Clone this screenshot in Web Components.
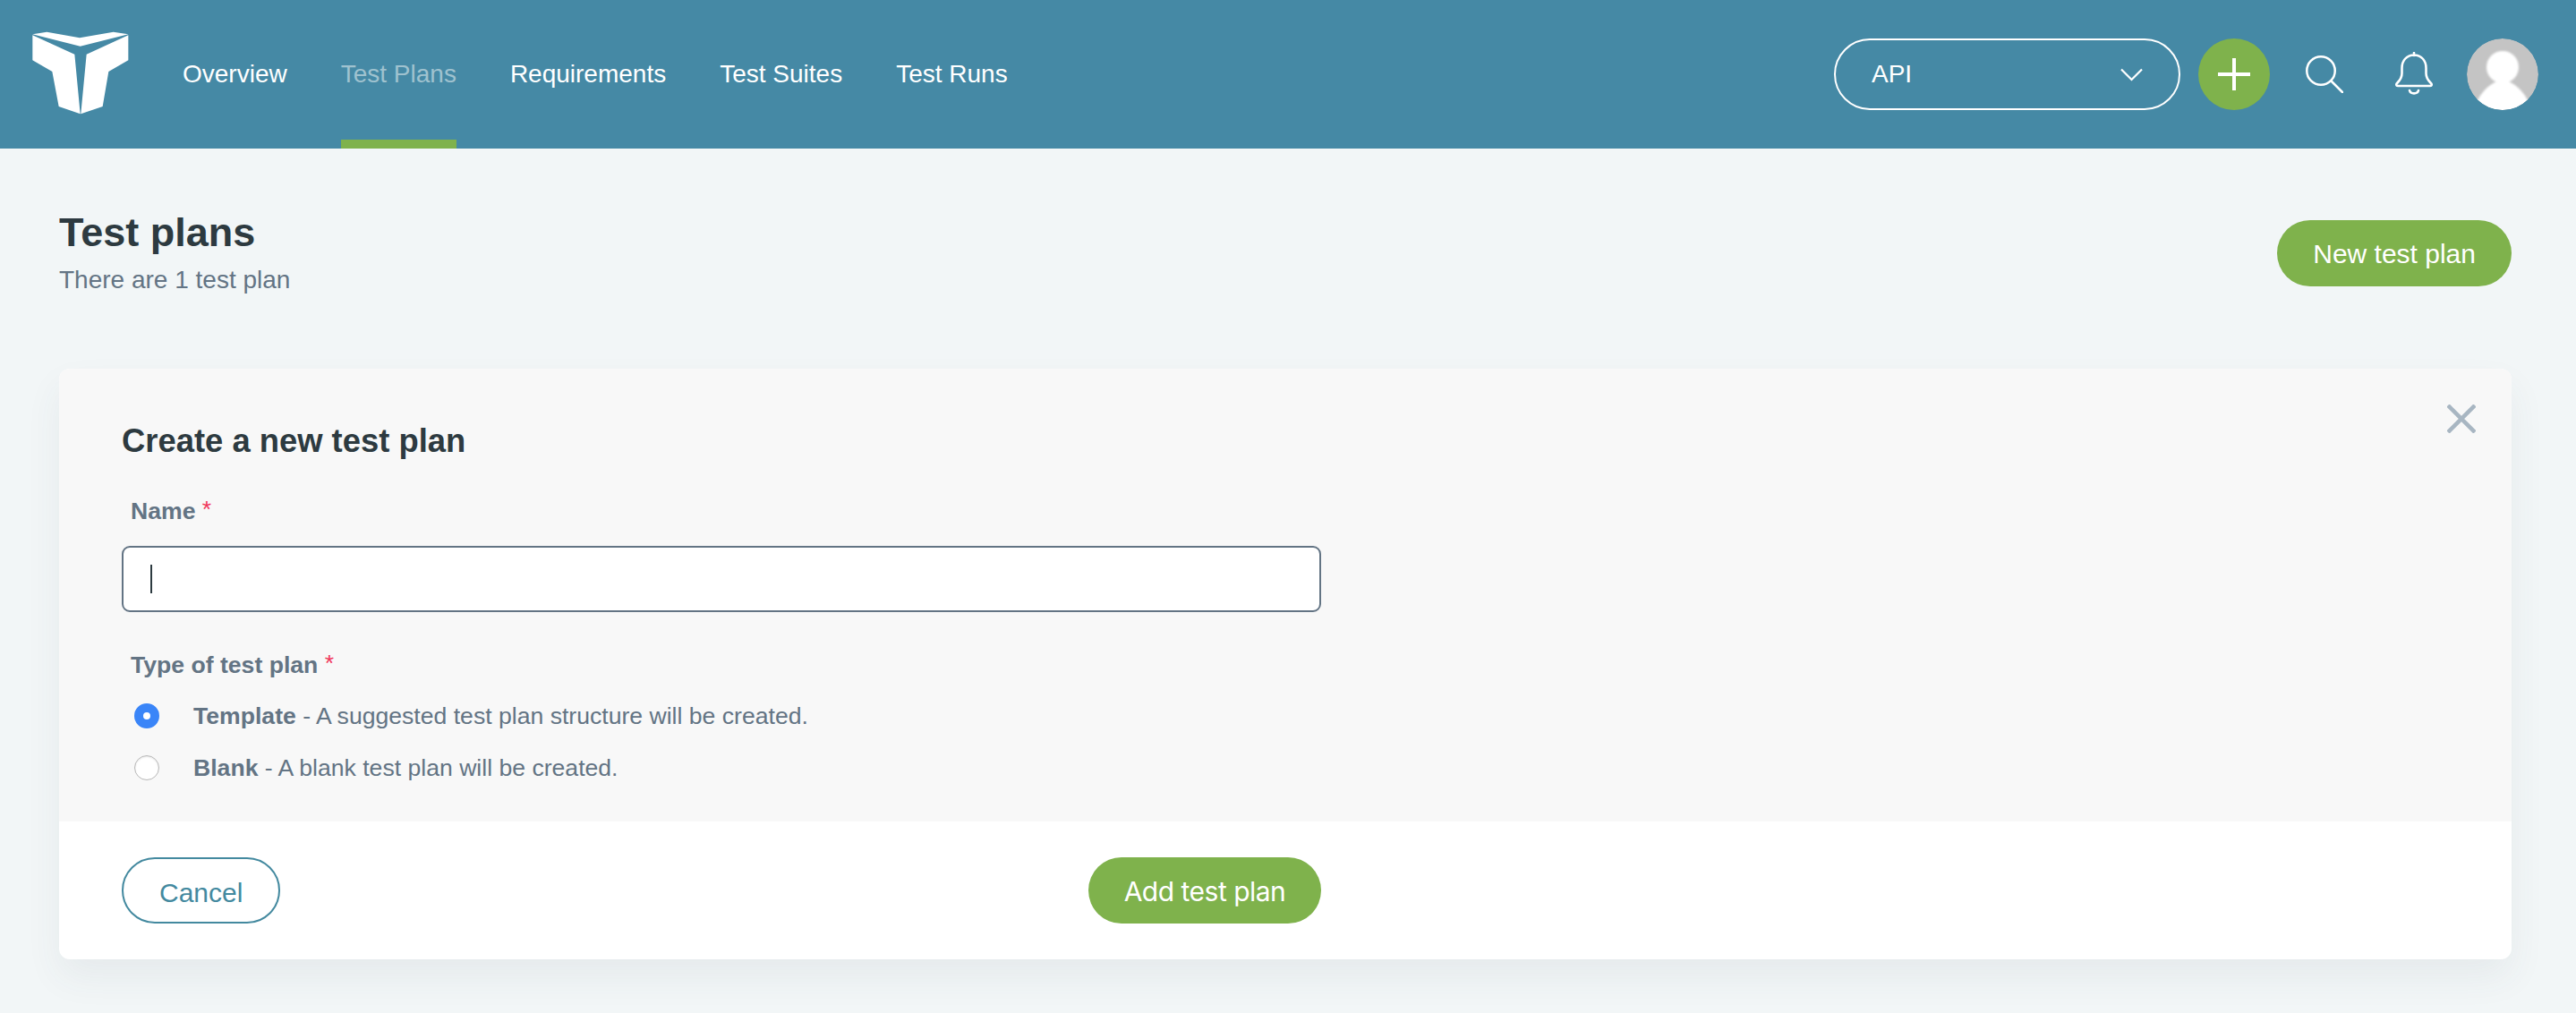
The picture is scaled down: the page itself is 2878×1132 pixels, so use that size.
<!DOCTYPE html>
<html lang="en">
<head>
<meta charset="utf-8">
<title>Test plans</title>
<style>
  html, body { margin: 0; height: 100%; }
  body { background: #f2f6f7; font-family: "Liberation Sans", Arial, sans-serif; overflow: hidden; }
</style>
</head>
<body>
<app-header></app-header>
<plans-page>
  <plan-form></plan-form>
</plans-page>

<script>
class PillButton extends HTMLElement {
  constructor() {
    super();
    this.attachShadow({ mode: "open" });
    this.shadowRoot.innerHTML = `
      <style>
        :host { display: inline-flex; }
        button {
          height: 74px;
          padding: 0 40px;
          border: none;
          border-radius: 37px;
          background: #7fb24c;
          color: #fff;
          font: 30px/76px "Liberation Sans", Arial, sans-serif;
          white-space: nowrap;
        }
        :host([outline]) button {
          background: #fff;
          color: #43899f;
          border: 2px solid #43899f;
        }
        :host([system]) button {
          width: 260px;
          padding: 0;
          font-family: Inter, sans-serif;
          letter-spacing: -.5px;
        }
      </style>
      <button><slot></slot></button>`;
  }
}

class AppHeader extends HTMLElement {
  constructor() {
    super();
    this.attachShadow({ mode: "open" });
    this.shadowRoot.innerHTML = `
      <style>
        :host {
          display: flex;
          align-items: center;
          height: 166px;
          background: #4589a5;
          padding: 0 42px 0 36px;
          color: #fff;
          font: 28px "Liberation Sans", Arial, sans-serif;
        }
        .logo { width: 108px; height: 93px; margin: 0 60px 4px 0; flex: none; }
        nav { display: flex; gap: 60px; height: 100%; }
        nav a { display: flex; align-items: center; box-sizing: border-box; height: 100%; }
        nav a.active { color: #9fc2cf; border-bottom: 10px solid #7fb24c; padding-top: 10px; }
        .right { margin-left: auto; display: flex; align-items: center; }
        .select {
          box-sizing: border-box;
          width: 387px;
          height: 80px;
          border: 2px solid #fff;
          border-radius: 40px;
          display: flex;
          align-items: center;
          justify-content: space-between;
          padding: 0 40px;
        }
        .plus {
          width: 80px;
          height: 80px;
          border-radius: 50%;
          background: #7fb24c;
          margin-left: 20px;
          display: flex;
          align-items: center;
          justify-content: center;
        }
        .search { width: 42px; height: 42px; margin: 0 0 0 40px; }
        .bell { width: 42px; height: 48px; margin: -2px 0 0 58px; }
        .avatar { width: 80px; height: 80px; border-radius: 50%; margin-left: 38px; display: block; }
      </style>
      <svg class="logo" viewBox="36 33 324 279">
        <path fill="#fff" d="M37 43 85 35 195 55 308 35 358 43 197 83Z M37 46 178 110 197 310 125 285 103 168 37 130Z M358 46 218 110 199 310 272 285 292 168 358 130Z"/>
      </svg>
      <nav>
        <a>Overview</a>
        <a class="active">Test Plans</a>
        <a>Requirements</a>
        <a>Test Suites</a>
        <a>Test Runs</a>
      </nav>
      <div class="right">
        <div class="select">
          <span>API</span>
          <svg width="25" height="15" viewBox="0 0 25 15" fill="none" stroke="#fff" stroke-width="2.2"><path d="M1 1.5 12.5 13 24 1.5"/></svg>
        </div>
        <div class="plus">
          <svg width="36" height="36" viewBox="0 0 36 36" fill="none" stroke="#fff" stroke-width="4"><path d="M18 0V36M0 18H36"/></svg>
        </div>
        <svg class="search" viewBox="0 0 42 42" fill="none" stroke="#fff" stroke-width="2.5" stroke-linecap="round">
          <circle cx="17" cy="17" r="15.75"/><path d="M29 29 41 41"/>
        </svg>
        <svg class="bell" viewBox="0 0 42 48" fill="none" stroke="#fff" stroke-width="2.6" stroke-linecap="round" stroke-linejoin="round">
          <path d="M21 1V4M21 3.5C12.5 3.5 7.5 10 7.5 18V24C7.5 29 5 32 2.5 34.5 .5 36.5 1 38 3 38H39C41 38 41.5 36.5 39.5 34.5 37 32 34.5 29 34.5 24V18C34.5 10 29.5 3.5 21 3.5Z"/>
          <path d="M16 43C17 47.5 25 47.5 26 43"/>
        </svg>
        <svg class="avatar" viewBox="0 0 80 80">
          <defs>
            <filter id="soft"><feGaussianBlur stdDeviation="1"/></filter>
            <clipPath id="round"><circle cx="40" cy="40" r="40"/></clipPath>
          </defs>
          <circle cx="40" cy="40" r="40" fill="#c4c4c4"/>
          <g clip-path="url(#round)">
            <g fill="#fff" filter="url(#soft)">
              <ellipse cx="40" cy="32" rx="18" ry="18"/>
              <path d="M10 74C15 60 25 52 33 48H47C55 52 65 60 70 74V90H10Z"/>
            </g>
          </g>
        </svg>
      </div>`;
  }
}

class PlansPage extends HTMLElement {
  constructor() {
    super();
    this.attachShadow({ mode: "open" });
    this.shadowRoot.innerHTML = `
      <style>
        :host { display: block; padding: 66px 72px 0 66px; }
        .top { display: flex; justify-content: space-between; align-items: flex-start; height: 180px; }
        h1 { margin: 0; font: bold 45px/56px "Liberation Sans", Arial, sans-serif; color: #2d3a40; }
        p { margin: 8px 0 0; font: 28px/34px "Liberation Sans", Arial, sans-serif; color: #637484; }
        pill-button { margin-top: 14px; }
      </style>
      <div class="top">
        <div>
          <h1>Test plans</h1>
          <p>There are 1 test plan</p>
        </div>
        <pill-button>New test plan</pill-button>
      </div>
      <slot></slot>`;
  }
}

class RadioOption extends HTMLElement {
  constructor() {
    super();
    this.attachShadow({ mode: "open" });
    this.shadowRoot.innerHTML = `
      <style>
        :host { display: flex; align-items: center; height: 28px; padding-left: 14px; font-size: 26.6px; color: #637484; }
        i { box-sizing: border-box; flex: none; width: 28px; height: 28px; border-radius: 50%; margin-right: 38px;
            background: #fff; border: 1.5px solid #b8b8b8; box-shadow: inset 0 1px 2px rgba(0,0,0,.1); }
        :host([checked]) i { border: 10px solid #3a85f8; box-shadow: none; }
        ::slotted(b) { font-weight: bold; }
      </style>
      <i></i><span><slot></slot></span>`;
  }
}

class PlanForm extends HTMLElement {
  constructor() {
    super();
    this.attachShadow({ mode: "open" });
    this.shadowRoot.innerHTML = `
      <style>
        :host {
          display: block;
          position: relative;
          border-radius: 12px;
          background: #fff;
          box-shadow: 0 20px 40px rgba(60, 80, 90, .065);
          font-family: "Liberation Sans", Arial, sans-serif;
        }
        .body { background: #f8f8f8; height: 506px; box-sizing: border-box; padding: 59px 0 0 70px; border-radius: 12px 12px 0 0; }
        h2 { margin: 0 0 39px; font: bold 36.4px/44px "Liberation Sans", Arial, sans-serif; color: #2d3a40; }
        label { display: block; margin-left: 10px; font: bold 26.6px/30px "Liberation Sans", Arial, sans-serif; color: #637484; }
        label span { color: #f0375a; vertical-align: 2px; font-weight: normal; }
        .input {
          box-sizing: border-box;
          width: 1340px;
          height: 74px;
          margin: 24px 0 42px;
          background: #fff;
          border: 2px solid #637484;
          border-radius: 9px;
          display: flex;
          align-items: center;
          padding-left: 30px;
        }
        .input i { width: 2px; height: 32px; background: #2d3a40; }
        .options { display: flex; flex-direction: column; gap: 30px; margin-top: 28px; }
        .close { position: absolute; top: 40px; right: 40px; width: 32px; height: 32px; }
        .foot { height: 154px; box-sizing: border-box; width: 1410px; padding: 40px 0 0 70px; display: flex; justify-content: space-between; }
      </style>
      <svg class="close" viewBox="0 0 32 32" stroke="#a8b6c2" stroke-width="4.5"><path d="M1 1 31 31M31 1 1 31"/></svg>
      <div class="body">
        <h2>Create a new test plan</h2>
        <label>Name <span>*</span></label>
        <div class="input"><i></i></div>
        <label>Type of test plan <span>*</span></label>
        <div class="options">
          <radio-option checked><b>Template</b> - A suggested test plan structure will be created.</radio-option>
          <radio-option><b>Blank</b> - A blank test plan will be created.</radio-option>
        </div>
      </div>
      <div class="foot">
        <pill-button outline>Cancel</pill-button>
        <pill-button system>Add test plan</pill-button>
      </div>`;
  }
}

customElements.define("pill-button", PillButton);
customElements.define("app-header", AppHeader);
customElements.define("radio-option", RadioOption);
customElements.define("plans-page", PlansPage);
customElements.define("plan-form", PlanForm);
</script>
</body>
</html>
